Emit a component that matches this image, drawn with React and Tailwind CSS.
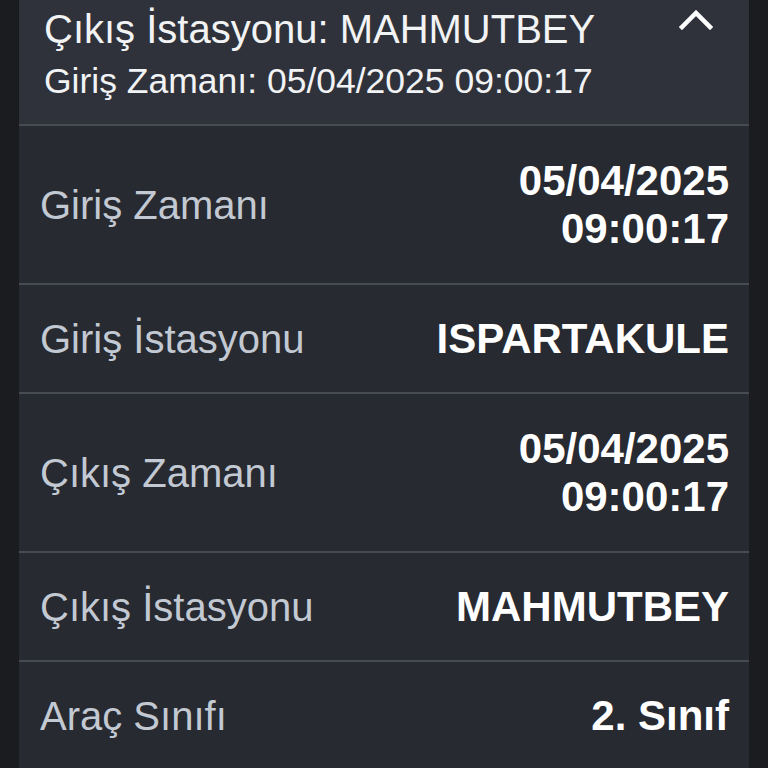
const rows = [
  { label: 'Giriş Zamanı', value: ['05/04/2025', '09:00:17'] },
  { label: 'Giriş İstasyonu', value: ['ISPARTAKULE'] },
  { label: 'Çıkış Zamanı', value: ['05/04/2025', '09:00:17'] },
  { label: 'Çıkış İstasyonu', value: ['MAHMUTBEY'] },
  { label: 'Araç Sınıfı', value: ['2. Sınıf'] },
]

export default function App() {
  return (
    <div className="h-[768px] w-[768px] overflow-hidden bg-[#1b1c20] px-[19px] font-['Liberation_Sans',Arial,sans-serif]">
      <div className="bg-[#272a31]">
        {/* Header */}
        <div className="flex h-[124px] items-start justify-between bg-[#2f323a] pl-[25px] pr-[36px]">
          <div className="pt-[5px]">
            <p className="text-[40px] leading-[48px] text-[#f2f3f5]">Çıkış İstasyonu: MAHMUTBEY</p>
            <p className="mt-[4px] text-[35.5px] leading-[48px] text-[#f2f3f5]">Giriş Zamanı: 05/04/2025 09:00:17</p>
          </div>
          <svg className="mt-[10px] h-[20px] w-[34px]" viewBox="0 0 34 20" fill="none">
            <path d="M3 17 L17 3 L31 17" stroke="#ffffff" strokeWidth="4.5" strokeLinecap="square" />
          </svg>
        </div>

        {rows.map((row) => (
          <div
            key={row.label}
            className={`flex items-center justify-between border-t-2 border-[#474b53] pl-[21px] pr-[20px] ${
              row.value.length > 1 ? 'h-[159px]' : 'h-[109px]'
            }`}
          >
            <span className="text-[40px] text-[#c3c9d2]">{row.label}</span>
            <div className="text-right text-[42px] font-bold leading-[48px] text-white">
              {row.value.map((v) => (
                <div key={v}>{v}</div>
              ))}
            </div>
          </div>
        ))}
      </div>
    </div>
  )
}
